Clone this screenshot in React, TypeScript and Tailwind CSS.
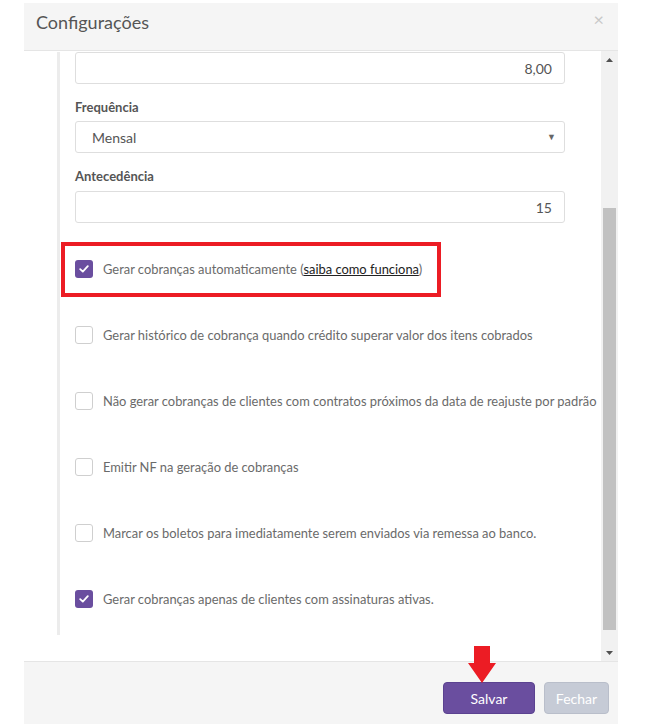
const font = { fontFamily: "Lato, 'Open Sans', sans-serif" };

const options = [
  { label: "Gerar histórico de cobrança quando crédito superar valor dos itens cobrados", checked: false },
  { label: "Não gerar cobranças de clientes com contratos próximos da data de reajuste por padrão", checked: false },
  { label: "Emitir NF na geração de cobranças", checked: false },
  { label: "Marcar os boletos para imediatamente serem enviados via remessa ao banco.", checked: false },
  { label: "Gerar cobranças apenas de clientes com assinaturas ativas.", checked: true },
];

const Checkbox = ({ checked }: { checked: boolean }) =>
  checked ? (
    <span className="flex h-[18px] w-[18px] shrink-0 items-center justify-center rounded-[3px] bg-[#6a4e9f]">
      <svg width="10" height="8" viewBox="0 0 10 8" fill="none">
        <path d="M1.2 4.2 3.8 6.6 8.8 1.2" stroke="#fff" strokeWidth="1.8" strokeLinecap="round" strokeLinejoin="round" />
      </svg>
    </span>
  ) : (
    <span className="h-[18px] w-[18px] shrink-0 rounded-[3px] border border-[#cfcfcf] bg-white" />
  );

const CheckRow = ({ checked, children }: { checked: boolean; children: React.ReactNode }) => (
  <div className="flex h-[18px] items-center gap-[10px]">
    <Checkbox checked={checked} />
    <span className="whitespace-nowrap text-[12.9px] leading-[18px] text-[#6a6a6a]">{children}</span>
  </div>
);

export default function App() {
  return (
    <div className="relative h-[724px] w-[655px] overflow-hidden bg-white" style={font}>
      <div className="ml-[24px] mt-[3px] flex w-[594px] flex-col">
        {/* header */}
        <div className="flex h-[48px] items-start justify-between border-b border-[#e5e5e5] bg-[#f5f5f5] pl-[12px] pr-[14px] pt-[7px]">
          <h1 className="text-[18px] leading-[24px] text-[#555]">Configurações</h1>
          <span className="text-[18px] leading-[18px] text-[#c8c8c8]">×</span>
        </div>

        {/* body */}
        <div className="flex h-[610px]">
          <div className="w-[577px] pl-[33px]">
            <div className="h-[583px] w-[508px] border-l-[3px] border-[#ececec] pl-[15px]">
              <div className="mt-[1px] flex h-[32px] w-[490px] items-center justify-end rounded-[3px] border border-[#dedede] px-[12px] text-[14px] text-[#555]">
                8,00
              </div>
              <div className="mt-[15px] text-[13px] font-bold leading-[17px] text-[#555]">Frequência</div>
              <div className="mt-[5px] flex h-[32px] w-[490px] items-center justify-between rounded-[3px] border border-[#dedede] pl-[16px] pr-[8px] text-[14px] text-[#555]">
                <span>Mensal</span>
                <span className="text-[9px] text-[#666]">▼</span>
              </div>
              <div className="mt-[15px] text-[13px] font-bold leading-[17px] text-[#555]">Antecedência</div>
              <div className="mt-[6px] flex h-[32px] w-[490px] items-center justify-end rounded-[3px] border border-[#dedede] px-[12px] text-[14px] text-[#555]">
                15
              </div>

              <div className="relative mt-[37px]">
                <CheckRow checked>
                  Gerar cobranças automaticamente (
                  <span className="text-[#222] underline">saiba como funciona</span>)
                </CheckRow>
                <div className="pointer-events-none absolute left-[-14px] top-[-18px] h-[55px] w-[380px] border-[4px] border-[#ec1c24]" />
              </div>

              <div className="mt-[48px] flex flex-col gap-[48px]">
                {options.map((o) => (
                  <CheckRow key={o.label} checked={o.checked}>
                    {o.label}
                  </CheckRow>
                ))}
              </div>
            </div>
          </div>

          {/* scrollbar */}
          <div className="flex w-[17px] flex-col items-center bg-[#f1f1f1]">
            <div className="flex h-[17px] w-full items-center justify-center">
              <svg width="7" height="4" viewBox="0 0 7 4"><path d="M0 4 3.5 0 7 4Z" fill="#505050" /></svg>
            </div>
            <div className="h-[140px]" />
            <div className="h-[422px] w-[13px] bg-[#c1c1c1]" />
            <div className="flex-1" />
            <div className="flex h-[17px] w-full items-center justify-center">
              <svg width="7" height="4" viewBox="0 0 7 4"><path d="M0 0 3.5 4 7 0Z" fill="#505050" /></svg>
            </div>
          </div>
        </div>

        {/* footer */}
        <div className="relative flex h-[80px] items-start justify-end gap-[9px] border-t border-[#e5e5e5] bg-[#f5f5f5] pr-[9px] pt-[20px]">
          <button className="h-[32px] w-[92px] rounded-[4px] border border-[#5b4290] bg-[#6a4e9f] text-[14px] text-white">
            Salvar
          </button>
          <button className="h-[32px] w-[65px] rounded-[4px] border border-[#b9beca] bg-[#c6cbd6] text-[14px] text-white">
            Fechar
          </button>
          <svg className="absolute left-[442px] top-[-16px]" width="32" height="38" viewBox="0 0 32 38">
            <path d="M8 0H24V17H30L16 37 2 17H8Z" fill="#ec1c24" />
          </svg>
        </div>
      </div>
    </div>
  );
}
